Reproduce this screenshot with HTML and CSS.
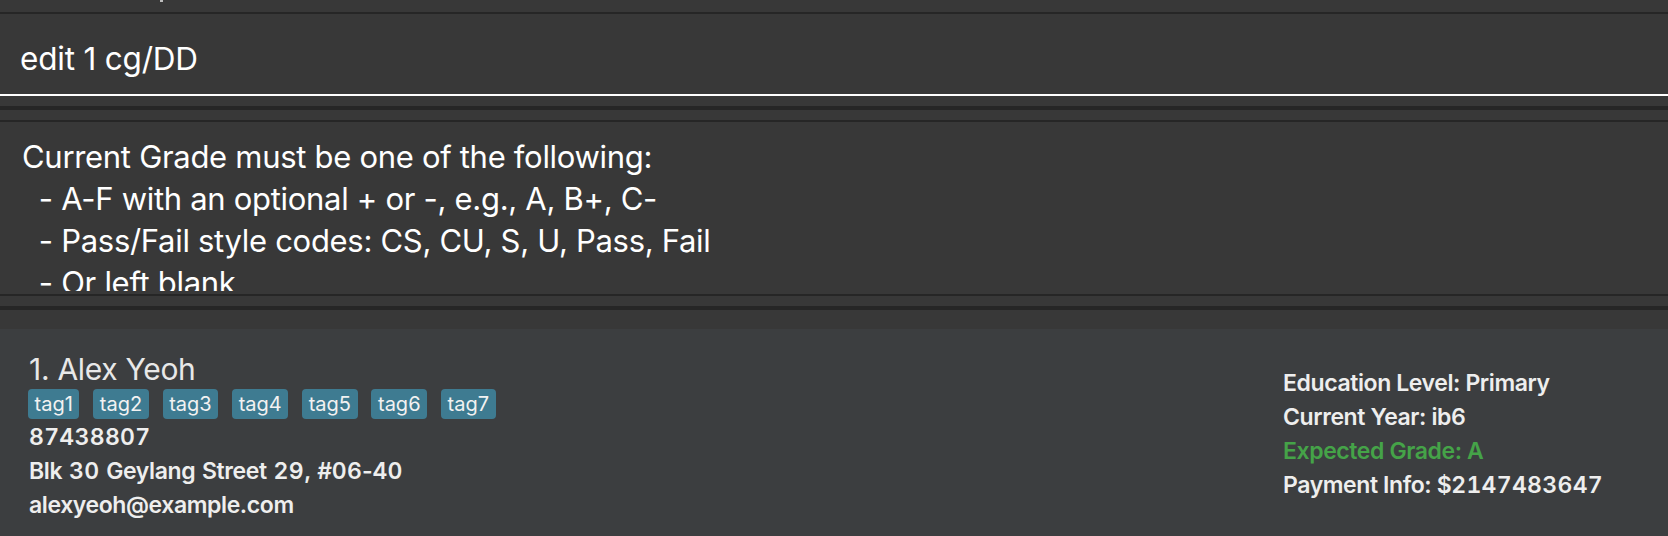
FILE: index.html
```html
<!DOCTYPE html>
<html lang="en">
<head>
<meta charset="utf-8">
<title>Student Book</title>
<link rel="stylesheet" href="styles.css">
</head>
<body>
<div class="app">
  <div class="top-pane"><span class="stray-mark"></span></div>
  <div class="rule-thin"></div>
  <div class="command-box">
    <div class="command-text">edit 1 cg/DD</div>
  </div>
  <div class="command-underline"></div>
  <div class="spacer"></div>
  <div class="rule-thick"></div>
  <div class="spacer"></div>
  <div class="rule-thin"></div>
  <div class="result-box">
    <div class="result-clip">
      <div class="result-line">Current Grade must be one of the following:</div>
      <div class="result-line">&nbsp;&nbsp;- A-F with an optional + or -, e.g., A, B+, C-</div>
      <div class="result-line">&nbsp;&nbsp;- Pass/Fail style codes: CS, CU, S, U, Pass, Fail</div>
      <div class="result-line">&nbsp;&nbsp;- Or left blank</div>
    </div>
  </div>
  <div class="rule-thin"></div>
  <div class="spacer"></div>
  <div class="rule-thick"></div>
  <div class="spacer-lg"></div>
  <div class="person-card">
    <div class="card-left">
      <div class="card-name">1. Alex Yeoh</div>
      <div class="tags">
        <span class="tag">tag1</span>
        <span class="tag">tag2</span>
        <span class="tag">tag3</span>
        <span class="tag">tag4</span>
        <span class="tag">tag5</span>
        <span class="tag">tag6</span>
        <span class="tag">tag7</span>
      </div>
      <div class="card-field"><span class="num">87438807</span></div>
      <div class="card-field address">Blk <span class="num">30</span> Geylang Street <span class="num">29</span>, #<span class="num">06</span>-<span class="num">40</span></div>
      <div class="card-field">alexyeoh@example.com</div>
    </div>
    <div class="card-right">
      <div class="card-field">Education Level: Primary</div>
      <div class="card-field">Current Year: ib<span class="num">6</span></div>
      <div class="card-field expected">Expected Grade: A</div>
      <div class="card-field">Payment Info: $<span class="num">2147483647</span></div>
    </div>
  </div>
</div>
</body>
</html>
```

FILE: styles.css
```css
html, body {
  margin: 0;
  padding: 0;
  background: #383838;
}

body {
  font-family: Inter, "Noto Sans", "Liberation Sans", sans-serif;
  color: #ffffff;
  width: 1668px;
  height: 536px;
  overflow: hidden;
}

.app {
  display: flex;
  flex-direction: column;
  height: 536px;
}

.top-pane {
  height: 12px;
  background: #383838;
  display: flex;
  align-items: flex-start;
}

.stray-mark {
  display: block;
  width: 3px;
  height: 2px;
  margin-left: 160px;
  background: #bdbdbd;
}

.rule-thin {
  height: 2px;
  background: #262626;
  flex: none;
}

.rule-thick {
  height: 4px;
  background: #262626;
  flex: none;
}

.spacer {
  height: 10px;
  flex: none;
}

.spacer-lg {
  height: 19px;
  flex: none;
}

.command-box {
  height: 80px;
  flex: none;
  background: #383838;
  padding-left: 20px;
  box-sizing: border-box;
  display: flex;
  align-items: flex-start;
}

.command-text {
  font-size: 31.5px;
  line-height: 36px;
  padding-top: 27px;
  letter-spacing: -0.2px;
  color: #ffffff;
}

.command-underline {
  height: 2px;
  background: #ffffff;
  flex: none;
}

.result-box {
  height: 172px;
  flex: none;
  background: #383838;
  box-sizing: border-box;
  padding: 0 0 3px 22px;
}

.result-clip {
  height: 169px;
  overflow: hidden;
  padding-top: 14px;
  box-sizing: border-box;
}

.result-line {
  font-size: 31px;
  line-height: 42px;
  letter-spacing: -0.3px;
  color: #ffffff;
  white-space: pre;
}

.person-card {
  flex: 1;
  background: #3c3e40;
  display: flex;
  justify-content: space-between;
  padding-left: 28px;
}

.card-left {
  display: flex;
  flex-direction: column;
  padding-top: 22px;
}

.card-name {
  font-size: 30px;
  line-height: 36px;
  font-weight: 400;
  color: #e8e8e8;
  padding-left: 1px;
  letter-spacing: -0.3px;
}

.tags {
  display: flex;
  gap: 13.8px;
  margin-top: 2px;
  margin-bottom: 1px;
}

.tag {
  display: block;
  height: 30px;
  line-height: 30px;
  padding: 0 6.6px;
  font-size: 20px;
  color: #f2f2f2;
  background: #3e7b91;
  border-radius: 4px;
}

.card-field {
  font-size: 23px;
  line-height: 34px;
  font-weight: 600;
  color: #eeeeee;
  letter-spacing: -0.4px;
  padding-left: 1px;
}

.card-field.address {
  word-spacing: 1.5px;
}

.num {
  font-variant-numeric: tabular-nums;
  letter-spacing: 0.3px;
}

.card-right {
  width: 386px;
  flex: none;
  padding-top: 37px;
}

.card-field.expected {
  color: #45a348;
}
```
